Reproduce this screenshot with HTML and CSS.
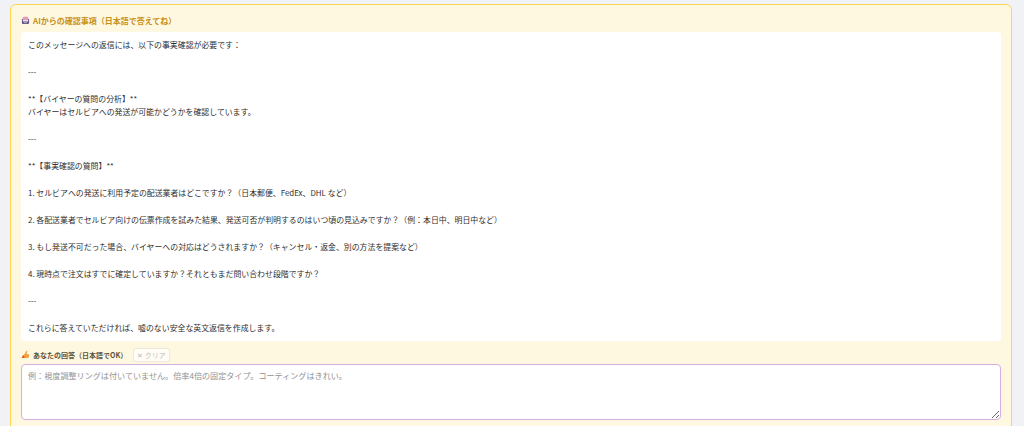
FILE: index.html
```html
<!DOCTYPE html>
<html lang="ja">
<head>
<meta charset="utf-8">
<title>AIからの確認事項</title>
<link rel="stylesheet" href="styles.css">
</head>
<body>
<section class="card">
  <h3 class="title">
    <svg class="icon" viewBox="0 0 10 10"><rect x="1" y="3" width="8" height="6" rx="1.5" fill="#5d4d80"/><rect x="2" y="0.8" width="6" height="4" rx="1.5" fill="#e89ab8"/><rect x="2" y="4.5" width="6" height="1.6" fill="#efe6f2"/><rect x="3" y="7" width="4" height="1" fill="#c9b8d8"/></svg>
    <span>AIからの確認事項（日本語で答えてね）</span>
  </h3>
  <div class="message">このメッセージへの返信には、以下の事実確認が必要です：

---

**【バイヤーの質問の分析】**
バイヤーはセルビアへの発送が可能かどうかを確認しています。

---

**【事実確認の質問】**

1. セルビアへの発送に利用予定の配送業者はどこですか？（日本郵便、FedEx、DHL など）

2. 各配送業者でセルビア向けの伝票作成を試みた結果、発送可否が判明するのはいつ頃の見込みですか？（例：本日中、明日中など）

3. もし発送不可だった場合、バイヤーへの対応はどうされますか？（キャンセル・返金、別の方法を提案など）

4. 現時点で注文はすでに確定していますか？それともまだ問い合わせ段階ですか？

---

これらに答えていただければ、嘘のない安全な英文返信を作成します。</div>
  <div class="answer-head">
    <svg class="icon" viewBox="0 0 10 10"><path d="M1 9 C0.6 6.5 2.5 5.5 3.5 5 L6 1 C6.8 0.8 7.2 1.4 7 2 L6 4.4 L8.6 4.8 C9.4 5.2 9 8.6 8 9 Z" fill="#f0a03c"/><path d="M1 9 C0.8 7.2 2 6.4 3 6 L4.4 9 Z" fill="#d9622b"/></svg>
    <label class="answer-label" for="answer">あなたの回答（日本語でOK）</label>
    <button class="clear" type="button">✕ クリア</button>
  </div>
  <textarea id="answer" class="answer" placeholder="例：視度調整リングは付いていません。倍率4倍の固定タイプ。コーティングはきれい。"></textarea>
</section>
</body>
</html>
```
FILE: styles.css
```css
* { box-sizing: border-box; }
html, body { height: 100%; }
body {
  margin: 0;
  padding: 4px 12.5px 0 10px;
  background: #f0f2f6;
  overflow: hidden;
  font-family: "Noto Sans CJK JP", "Noto Sans", sans-serif;
}
.card {
  height: 440px;
  padding: 8px 10px 0 10px;
  background: #fff8e1;
  border: 1.5px solid #ffd54f;
  border-radius: 6px;
}
.title {
  display: flex;
  align-items: center;
  gap: 3px;
  height: 15px;
  margin: 0 0 4px;
  font-size: 8px;
  font-weight: 700;
  color: #c8901a;
}
.icon { width: 9px; height: 9px; flex: none; }
.message {
  height: 309px;
  padding: 5.7px 7px;
  background: #fff;
  border-radius: 4px;
  font-size: 7.9px;
  line-height: 13.48px;
  color: #2e2e2e;
  white-space: pre-wrap;
}
.answer-head {
  display: flex;
  align-items: center;
  gap: 3px;
  height: 15px;
  margin: 6px 0 2px;
}
.answer-label {
  font-size: 7px;
  font-weight: 700;
  color: #5a5040;
}
.clear {
  height: 14px;
  margin-left: 3px;
  padding: 0 3px;
  background: #fffdf6;
  border: 1px solid #eee8da;
  border-radius: 2px;
  font: 7px "Noto Sans CJK JP", sans-serif;
  color: #bdbdbd;
}
.answer {
  display: block;
  width: 100%;
  height: 55.5px;
  padding: 3.5px 6px;
  background: #fff;
  border: 1.5px solid #d8aede;
  border-radius: 4px;
  outline: none;
  font: 8.1px/13px "Noto Sans CJK JP", sans-serif;
  color: #333;
}
.answer::placeholder { color: #929292; opacity: 1; }
```
